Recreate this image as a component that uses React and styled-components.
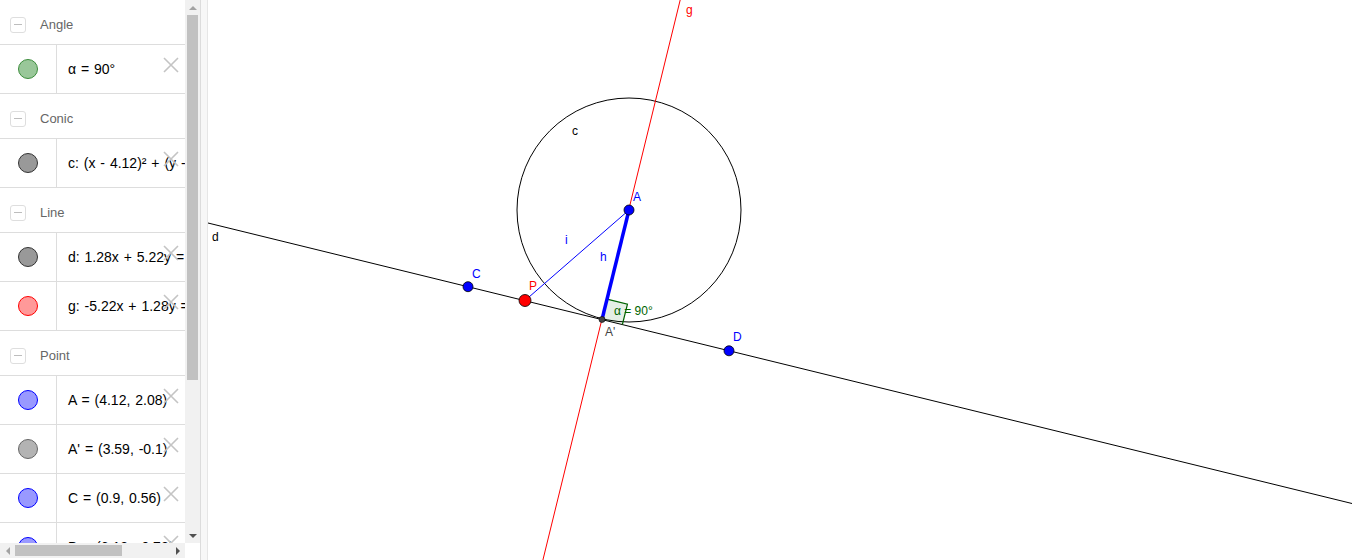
import React from 'react'
import styled, { createGlobalStyle, css } from 'styled-components'

const GlobalStyle = createGlobalStyle`
  html, body {
    margin: 0;
    padding: 0;
    background: #fff;
    overflow: hidden;
  }
  body {
    font-family: "Liberation Sans", Arial, sans-serif;
  }
`

const Page = styled.div`
  display: flex;
  width: 1352px;
  height: 560px;
`

const AlgebraPanel = styled.div`
  flex: none;
  width: 200px;
  display: flex;
  flex-direction: column;
`

const PanelBody = styled.div`
  flex: 1;
  display: flex;
  min-height: 0;
`

const List = styled.div`
  width: 185px;
  overflow: hidden;
`

const GroupHeader = styled.div`
  height: 45px;
  box-sizing: border-box;
  padding: 5px 0 0 10px;
  border-bottom: 1px solid #dddddd;
  display: flex;
  align-items: center;
  gap: 14px;
  font-size: 13px;
  color: #666;
`

const Toggle = styled.div`
  width: 16px;
  height: 16px;
  box-sizing: border-box;
  border: 1px solid #dedede;
  border-radius: 3px;
  display: flex;
  align-items: center;
  justify-content: center;

  &::after {
    content: '';
    width: 8px;
    height: 1.5px;
    background: #bdbdbd;
  }
`

const ItemRow = styled.div`
  position: relative;
  height: 49px;
  box-sizing: border-box;
  border-bottom: 1px solid #dddddd;
  display: flex;
`

const MarbleCell = styled.div`
  flex: none;
  width: 57px;
  box-sizing: border-box;
  border-right: 1px solid #dddddd;
  display: flex;
  align-items: center;
  justify-content: center;
`

const Marble = styled.div`
  width: 20px;
  height: 20px;
  box-sizing: border-box;
  border-radius: 50%;
  background: ${p => p.$fill};
  border: 1px solid ${p => p.$stroke};
`

const ItemText = styled.div`
  flex: 1;
  min-width: 0;
  padding-left: 11px;
  display: flex;
  align-items: center;
  white-space: nowrap;
  overflow: hidden;
  font-size: 14px;
  word-spacing: 1px;
  color: #000;
`

const DeleteButton = styled.div`
  position: absolute;
  right: 6px;
  top: 12px;
  width: 16px;
  height: 16px;
  display: flex;
`

const VScroll = styled.div`
  flex: none;
  width: 15px;
  background: #f1f1f1;
  display: flex;
  flex-direction: column;
`

const VTrack = styled.div`
  flex: 1;
  padding: 0 2px;
`

const VThumb = styled.div`
  height: 365px;
  background: #c1c1c1;
`

const arrowShapes = {
  up: css`border-width: 0 4px 4px 4px; border-color: transparent transparent currentColor transparent;`,
  down: css`border-width: 4px 4px 0 4px; border-color: currentColor transparent transparent transparent;`,
  left: css`border-width: 4px 4px 4px 0; border-color: transparent currentColor transparent transparent;`,
  right: css`border-width: 4px 0 4px 4px; border-color: transparent transparent transparent currentColor;`,
}

const Arrow = styled.div`
  flex: none;
  width: 15px;
  height: 15px;
  display: flex;
  align-items: center;
  justify-content: center;
  color: ${p => (p.$dim ? '#a3a3a3' : '#505050')};

  &::before {
    content: '';
    width: 0;
    height: 0;
    border-style: solid;
    ${p => arrowShapes[p.$dir]}
  }
`

const BottomBar = styled.div`
  flex: none;
  height: 15px;
  margin-bottom: 2px;
  display: flex;
`

const HScroll = styled.div`
  width: 185px;
  background: #f1f1f1;
  display: flex;
`

const HTrack = styled.div`
  flex: 1;
  padding: 2px 0;
`

const HThumb = styled.div`
  width: 107px;
  height: 11px;
  background: #c1c1c1;
`

const Corner = styled.div`
  width: 15px;
  background: #fff;
`

const Divider = styled.div`
  flex: none;
  width: 8px;
  box-sizing: border-box;
  background: #f7f7f7;
  border-left: 1px solid #dcdcdc;
  border-right: 1px solid #e6e6e6;
`

const Canvas = styled.div`
  flex: 1;
  background: #fff;
  overflow: hidden;
`

const Label = styled.text`
  font-family: "Liberation Sans", Arial, sans-serif;
  font-size: 12px;
  fill: ${p => p.$color || '#000'};
`

const groups = [
  {
    name: 'Angle',
    items: [{ text: 'α = 90°', fill: '#99c799', stroke: '#3c8d3c' }],
  },
  {
    name: 'Conic',
    items: [{ text: 'c: (x - 4.12)² + (y - 2.08)² = 12.6', fill: '#999999', stroke: '#333333' }],
  },
  {
    name: 'Line',
    items: [
      { text: 'd: 1.28x + 5.22y = 1.26', fill: '#999999', stroke: '#333333' },
      { text: 'g: -5.22x + 1.28y = -18.88', fill: '#ff9999', stroke: '#ff0000' },
    ],
  },
  {
    name: 'Point',
    items: [
      { text: 'A = (4.12, 2.08)', fill: '#9999ff', stroke: '#0000ff' },
      { text: "A' = (3.59, -0.1)", fill: '#b3b3b3', stroke: '#666666' },
      { text: 'C = (0.9, 0.56)', fill: '#9999ff', stroke: '#0000ff' },
      { text: 'D = (6.12, -0.72)', fill: '#9999ff', stroke: '#0000ff' },
    ],
  },
]

function CrossIcon() {
  return (
    <svg width="16" height="16" viewBox="0 0 16 16">
      <path d="M1 1 L15 15 M15 1 L1 15" stroke="#c4c4c4" strokeWidth="1.6" fill="none" />
    </svg>
  )
}

function AlgebraView() {
  return (
    <AlgebraPanel>
      <PanelBody>
        <List>
          {groups.map(g => (
            <React.Fragment key={g.name}>
              <GroupHeader>
                <Toggle />
                <span>{g.name}</span>
              </GroupHeader>
              {g.items.map(it => (
                <ItemRow key={it.text}>
                  <MarbleCell>
                    <Marble $fill={it.fill} $stroke={it.stroke} />
                  </MarbleCell>
                  <ItemText>{it.text}</ItemText>
                  <DeleteButton>
                    <CrossIcon />
                  </DeleteButton>
                </ItemRow>
              ))}
            </React.Fragment>
          ))}
        </List>
        <VScroll>
          <Arrow $dir="up" $dim />
          <VTrack>
            <VThumb />
          </VTrack>
          <Arrow $dir="down" />
        </VScroll>
      </PanelBody>
      <BottomBar>
        <HScroll>
          <Arrow $dir="left" $dim />
          <HTrack>
            <HThumb />
          </HTrack>
          <Arrow $dir="right" />
        </HScroll>
        <Corner />
      </BottomBar>
    </AlgebraPanel>
  )
}

// geometry in page coordinates, shifted by the panel width
const Ap = { x: 602, y: 319.5 }
const A = { x: 629, y: 210 }
const P = { x: 525, y: 300.5 }
const C = { x: 468, y: 286.7 }
const D = { x: 729, y: 350.8 }

function GraphicsView() {
  const u = { x: 0.9712, y: 0.2381 }
  const v = { x: 0.2404, y: -0.9706 }
  const s = 21
  const p1 = { x: Ap.x + s * v.x, y: Ap.y + s * v.y }
  const p2 = { x: Ap.x + s * (u.x + v.x), y: Ap.y + s * (u.y + v.y) }
  const p3 = { x: Ap.x + s * u.x, y: Ap.y + s * u.y }

  return (
    <Canvas>
      <svg width="1144" height="560">
        <g transform="translate(-208 0)">
          <line x1="208" y1="223" x2="1352" y2="503.5" stroke="#000" strokeWidth="1" />
          <circle cx={A.x} cy={A.y} r="112" stroke="#000" strokeWidth="1" fill="none" />
          <line x1="680.2" y1="0" x2="542.9" y2="560" stroke="#ff0000" strokeWidth="1" />
          <polygon
            points={`${Ap.x},${Ap.y} ${p1.x},${p1.y} ${p2.x},${p2.y} ${p3.x},${p3.y}`}
            fill="rgba(0,100,0,0.1)"
            stroke="none"
          />
          <polyline
            points={`${p1.x},${p1.y} ${p2.x},${p2.y} ${p3.x},${p3.y}`}
            fill="none"
            stroke="#006400"
            strokeWidth="1.2"
          />
          <line x1={P.x} y1={P.y} x2={A.x} y2={A.y} stroke="#0000ff" strokeWidth="1" />
          <line x1={Ap.x} y1={Ap.y} x2={A.x} y2={A.y} stroke="#0000ff" strokeWidth="3.5" />

          <circle cx={C.x} cy={C.y} r="5" fill="#0000ff" stroke="#000" strokeWidth="0.8" />
          <circle cx={D.x} cy={D.y} r="5" fill="#0000ff" stroke="#000" strokeWidth="0.8" />
          <circle cx={A.x} cy={A.y} r="5" fill="#0000ff" stroke="#000" strokeWidth="0.8" />
          <circle cx={P.x} cy={P.y} r="6" fill="#ff0000" stroke="#000" strokeWidth="0.8" />
          <circle cx={Ap.x} cy={Ap.y} r="3" fill="#444" stroke="#000" strokeWidth="0.6" />

          <Label x="686" y="14" $color="#ff0000">g</Label>
          <Label x="572" y="135">c</Label>
          <Label x="212" y="241">d</Label>
          <Label x="633" y="201" $color="#0000ff">A</Label>
          <Label x="565" y="243.5" $color="#0000ff">i</Label>
          <Label x="600" y="261" $color="#0000ff">h</Label>
          <Label x="529" y="289.5" $color="#ff0000">P</Label>
          <Label x="472" y="277.5" $color="#0000ff">C</Label>
          <Label x="733" y="341" $color="#0000ff">D</Label>
          <Label x="605" y="336" $color="#444">A'</Label>
          <Label x="614" y="315" $color="#006400">α = 90°</Label>
        </g>
      </svg>
    </Canvas>
  )
}

export default function App() {
  return (
    <>
      <GlobalStyle />
      <Page>
        <AlgebraView />
        <Divider />
        <GraphicsView />
      </Page>
    </>
  )
}
